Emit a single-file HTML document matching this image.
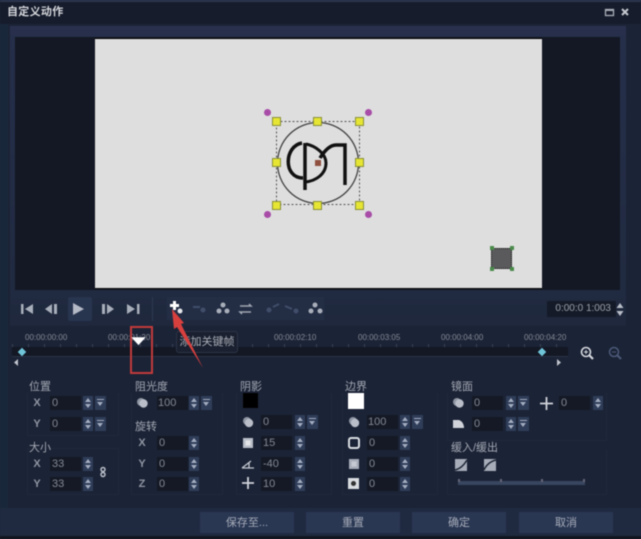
<!DOCTYPE html>
<html><head><meta charset="utf-8">
<style>
html,body{margin:0;padding:0;background:#1b2336}
body{width:641px;height:539px;overflow:hidden;position:relative;background:#1b2336;font-family:"Liberation Sans","Noto Sans CJK SC",sans-serif;filter:blur(.45px)}
div{position:absolute;box-sizing:border-box}
.t{color:#a3a8b2;font-size:11px;line-height:14px;white-space:nowrap}
.l{color:#8f95a1;font-size:11px;line-height:14px;width:12px;text-align:center;font-weight:bold}
.i{background:#141925;color:#828894;font-size:11px;line-height:15px;height:14px;padding-left:2px;width:31px}
.s{width:10px;height:14px;background:#2f3d59}
.s:before{content:"";position:absolute;left:2px;top:2px;border:3px solid transparent;border-top:0;border-bottom:4px solid #a3adc0}
.s:after{content:"";position:absolute;left:2px;bottom:2px;border:3px solid transparent;border-bottom:0;border-top:4px solid #a3adc0}
.d{width:11px;height:14px;background:#2f3d59}
.d:before{content:"";position:absolute;left:2px;top:3px;width:7px;height:1px;background:#a3adc0}
.d:after{content:"";position:absolute;left:2px;top:6px;border:3.5px solid transparent;border-bottom:0;border-top:4px solid #a3adc0}
.g{border:1px solid #20283b}
.b{top:512px;height:21px;background:#2a3753;color:#a5abb8;font-size:11px;line-height:22px;text-align:center}
.tc{color:#858a94;font-size:8px;line-height:10px;top:333px;white-space:nowrap}
.h{width:9px;height:9px;background:#e6e534;border:1px solid #8a9038}
.m{width:7px;height:7px;border-radius:50%;background:#a84ca8}
</style></head><body>
<div style="left:0;top:0;width:641px;height:2px;background:#2c3650"></div>
<div style="left:0;top:2px;width:641px;height:22px;background:#161c2c"></div>
<div class="t" style="left:7px;top:5px;font-size:11px;font-weight:bold;color:#d4d6da;letter-spacing:.3px">自定义动作</div>
<svg style="position:absolute;left:600px;top:2px" width="30" height="18"><rect x="5.500" y="7.500" width="8" height="6" fill="none" stroke="#a9adb6" stroke-width="1.300"/><rect x="5" y="7" width="9" height="2" fill="#a9adb6"/><path d="M22 7l6 6M28 7l-6 6" stroke="#c4c7cd" stroke-width="2"/></svg>
<div style="left:0;top:24px;width:8px;height:490px;background:#19273a"></div>
<div style="left:10px;top:26px;width:616px;height:300px;background:linear-gradient(#29304f 0,#262f4a 12px,#202a40 270px,#1f283c)"></div>
<div style="left:15px;top:37px;width:605px;height:253px;background:#141824"></div>
<div style="left:95px;top:38px;width:447px;height:251px;background:#dedede;border-top:1px solid #000;border-bottom:1px solid #0a0a0a"></div>
<svg style="position:absolute;left:240px;top:90px" width="150" height="140">
<rect x="36.500" y="31.500" width="83" height="83" fill="none" stroke="#555" stroke-width="1" stroke-dasharray="2 2"/>
<circle cx="78" cy="73" r="40.500" fill="none" stroke="#444" stroke-width="1.300"/>
<path d="M62 53C44 56 43 88 63 88" fill="none" stroke="#111" stroke-width="3.500"/>
<path d="M65 53V100" fill="none" stroke="#111" stroke-width="3.500"/>
<path d="M66 54C76 56 86 64 86 73C86 84 76 91 65 92" fill="none" stroke="#111" stroke-width="3"/>
<path d="M80 68C85 60 90 55 96 55L105 55V95" fill="none" stroke="#111" stroke-width="3.500"/>
<rect x="75" y="70" width="6" height="6" fill="#8f5040"/>
</svg>
<div class="m" style="left:264px;top:109px"></div><div class="m" style="left:365px;top:109px"></div><div class="m" style="left:264px;top:211px"></div><div class="m" style="left:365px;top:211px"></div>
<div class="h" style="left:272px;top:117px"></div><div class="h" style="left:313px;top:117px"></div><div class="h" style="left:355px;top:117px"></div>
<div class="h" style="left:272px;top:158px"></div><div class="h" style="left:355px;top:158px"></div>
<div class="h" style="left:272px;top:201px"></div><div class="h" style="left:313px;top:201px"></div><div class="h" style="left:355px;top:201px"></div>
<div style="left:491px;top:248px;width:21px;height:21px;background:#5a5a5c;border:1px dotted #222"></div>
<div style="left:490px;top:246px;width:4px;height:4px;background:#4a8a4a"></div><div style="left:510px;top:246px;width:4px;height:4px;background:#4a8a4a"></div><div style="left:490px;top:267px;width:4px;height:4px;background:#4a8a4a"></div><div style="left:510px;top:267px;width:4px;height:4px;background:#4a8a4a"></div>

<div style="left:68px;top:297px;width:24px;height:24px;background:#28354f;border-radius:2px"></div>
<div style="left:167px;top:297px;width:157px;height:23px;background:#232e45"></div>
<div style="left:152px;top:297px;width:1px;height:24px;background:#2d3850"></div>
<svg style="position:absolute;left:15px;top:297px" width="320" height="24" fill="#a9afba">
<rect x="6" y="7" width="2.500" height="10"/><path d="M18 7v10l-8-5z"/>
<path d="M37 7v10l-7-5z"/><rect x="39" y="7" width="3" height="10"/>
<path d="M58 6v12l11-6z" fill="#b4bac6"/>
<rect x="87" y="7" width="3" height="10"/><path d="M92 7v10l7-5z"/>
<path d="M112 7v10l8-5z"/><rect x="122" y="7" width="2.500" height="10"/>
<path d="M155 8h3v3h3v3h-3v3h-3v-3h-3v-3h3z" fill="#fff" transform="translate(3 -4)"/><circle cx="165" cy="14" r="2.500" fill="#e4e6ea"/>
<path d="M178 10h7" stroke="#414e69" stroke-width="2"/><circle cx="188" cy="13" r="2.500" fill="#414e69"/>
<circle cx="208" cy="8" r="2.500"/><circle cx="204" cy="14" r="2.500"/><circle cx="212" cy="14" r="2.500"/>
<path d="M225 9h11l-2-2M236 15h-11l2 2" stroke="#a0a6b2" stroke-width="1.500" fill="none"/>
<circle cx="254" cy="13" r="2.500" fill="#414e69"/><path d="M258 10l6-3" stroke="#414e69" stroke-width="2"/>
<path d="M270 9l7 3" stroke="#414e69" stroke-width="2"/><circle cx="281" cy="14" r="2.500" fill="#414e69"/>
<circle cx="300" cy="8" r="2.500"/><circle cx="296" cy="14" r="2.500"/><circle cx="305" cy="14" r="2.500"/>
</svg>
<div style="left:547px;top:301px;width:69px;height:16px;background:#141a27;color:#9ba0aa;font-size:10px;line-height:16px;text-align:right;padding-right:5px;white-space:nowrap">0:00:0 1:003</div>
<svg style="position:absolute;left:615px;top:302px" width="10" height="15" fill="#b9bec8"><path d="M5 1l3.500 5h-7zM5 14l3.500-5h-7z"/></svg>

<div class="tc" style="left:25px">00:00:00:00</div>
<div class="tc" style="left:108px">00:00:01:20</div>
<div class="tc" style="left:274px">00:00:02:10</div>
<div class="tc" style="left:358px">00:00:03:05</div>
<div class="tc" style="left:441px">00:00:04:00</div>
<div class="tc" style="left:524px">00:00:04:20</div>
<div style="left:12px;top:344px;width:556px;height:3px;background:repeating-linear-gradient(90deg,#3a4257 0 1px,transparent 1px 16px)"></div>
<div style="left:12px;top:347px;width:556px;height:10px;background:#131824;border-bottom:1px solid #2a3246"></div>
<div style="left:19px;top:349px;width:6px;height:6px;background:#6fc4d8;transform:rotate(45deg)"></div>
<div style="left:539px;top:349px;width:6px;height:6px;background:#6fc4d8;transform:rotate(45deg)"></div>
<svg style="position:absolute;left:12px;top:358px" width="552" height="10" fill="#c0c4cc"><path d="M6 1v7l-4-3.500z"/><path d="M545 1v7l4-3.500z"/></svg>
<svg style="position:absolute;left:578px;top:345px" width="44" height="18" fill="none"><circle cx="8" cy="7" r="4.500" stroke="#d5d8de" stroke-width="1.600"/><path d="M6 7h4M8 5v4" stroke="#d5d8de"/><path d="M11 10l4 4" stroke="#d5d8de" stroke-width="2.200"/><circle cx="36" cy="7" r="4.500" stroke="#4c5a78" stroke-width="1.500"/><path d="M34 7h4" stroke="#4c5a78"/><path d="M39 10l4 4" stroke="#4c5a78" stroke-width="2"/></svg>
<div style="left:176px;top:331px;width:62px;height:22px;background:#1a2030;border:1px solid #2c3446;border-radius:3px;color:#a9adb6;font-size:11px;line-height:20px;text-align:center;white-space:nowrap">添加关键帧</div>
<svg style="position:absolute;left:125px;top:300px" width="90" height="78">
<rect x="6" y="27" width="21" height="46" fill="none" stroke="#c03a3a" stroke-width="2"/>
<path d="M8 38h11l-5.500 6z" fill="#fff" stroke="#fff" stroke-width="1.500"/>
<path d="M47 9l12 14-3 1 22 44-26-41-3 2z" fill="#d8403e"/>
</svg>

<div class="g" style="left:27px;top:393px;width:92px;height:43px;border-top:0"></div>
<div class="g" style="left:27px;top:448px;width:92px;height:47px"></div>
<div class="g" style="left:131px;top:393px;width:92px;height:102px;border-top:0"></div>
<div class="g" style="left:236px;top:393px;width:96px;height:102px;border-top:0"></div>
<div class="g" style="left:342px;top:393px;width:96px;height:102px;border-top:0"></div>
<div class="g" style="left:447px;top:393px;width:160px;height:48px;border-top:0"></div>
<div class="g" style="left:447px;top:450px;width:160px;height:45px;border-top:0"></div>

<div class="t" style="left:29px;top:380px">位置</div>
<div class="l" style="left:31px;top:396px">X</div><div class="i" style="left:50px;top:396px">0</div><div class="s" style="left:83px;top:396px"></div><div class="d" style="left:95px;top:396px"></div>
<div class="l" style="left:31px;top:417px">Y</div><div class="i" style="left:50px;top:417px">0</div><div class="s" style="left:83px;top:417px"></div><div class="d" style="left:95px;top:417px"></div>
<div class="t" style="left:29px;top:441px">大小</div>
<div class="l" style="left:31px;top:457px">X</div><div class="i" style="left:50px;top:457px">33</div><div class="s" style="left:83px;top:457px"></div>
<div class="l" style="left:31px;top:477px">Y</div><div class="i" style="left:50px;top:477px">33</div><div class="s" style="left:83px;top:477px"></div>
<svg style="position:absolute;left:99px;top:466px" width="8" height="12" fill="none" stroke="#b9bec8" stroke-width="1.500"><circle cx="4" cy="3.500" r="2"/><circle cx="4" cy="8.500" r="2"/></svg>

<div class="t" style="left:135px;top:380px">阻光度</div>
<svg style="position:absolute;left:136px;top:397px" width="13" height="12" fill="#b9bec8"><circle cx="5" cy="5" r="4" fill="#8f96a3"/><circle cx="7.500" cy="6.500" r="4.200"/></svg>
<div class="i" style="left:157px;top:396px;padding-left:1px">100</div><div class="s" style="left:189px;top:396px"></div><div class="d" style="left:201px;top:396px"></div>
<div class="t" style="left:135px;top:420px">旋转</div>
<div class="l" style="left:136px;top:436px">X</div><div class="i" style="left:157px;top:436px">0</div><div class="s" style="left:189px;top:436px"></div>
<div class="l" style="left:136px;top:457px">Y</div><div class="i" style="left:157px;top:457px">0</div><div class="s" style="left:189px;top:457px"></div>
<div class="l" style="left:136px;top:477px">Z</div><div class="i" style="left:157px;top:477px">0</div><div class="s" style="left:189px;top:477px"></div>

<div class="t" style="left:240px;top:380px">阴影</div>
<div style="left:243px;top:393px;width:15px;height:15px;background:#000"></div>
<div class="i" style="left:261px;top:415px">0</div><div class="s" style="left:295px;top:415px"></div><div class="d" style="left:307px;top:415px"></div>
<div class="i" style="left:261px;top:436px">15</div><div class="s" style="left:295px;top:436px"></div>
<div class="i" style="left:261px;top:457px">-40</div><div class="s" style="left:295px;top:457px"></div>
<div class="i" style="left:261px;top:477px">10</div><div class="s" style="left:295px;top:477px"></div>
<svg style="position:absolute;left:241px;top:415px" width="14" height="78">
<circle cx="6" cy="6" r="4" fill="#8f96a3"/><circle cx="8" cy="8" r="4.200" fill="#b9bec8"/>
<rect x="2" y="23" width="10" height="10" fill="#b9bec8"/><rect x="4.500" y="25.500" width="5" height="5" fill="#e2e4e8"/>
<path d="M1 53h12M1 53l9-7M8 47v6" stroke="#c4c8d0" stroke-width="1.300" fill="none"/>
<path d="M7 62v12M1 68h12" stroke="#d0d3da" stroke-width="1.800"/>
</svg>

<div class="t" style="left:345px;top:380px">边界</div>
<div style="left:348px;top:393px;width:16px;height:16px;background:#fff"></div>
<div class="i" style="left:367px;top:415px;padding-left:1px">100</div><div class="s" style="left:400px;top:415px"></div><div class="d" style="left:412px;top:415px"></div>
<div class="i" style="left:367px;top:436px">0</div><div class="s" style="left:400px;top:436px"></div>
<div class="i" style="left:367px;top:457px">0</div><div class="s" style="left:400px;top:457px"></div>
<div class="i" style="left:367px;top:477px">0</div><div class="s" style="left:400px;top:477px"></div>
<svg style="position:absolute;left:347px;top:415px" width="14" height="78">
<circle cx="6" cy="6" r="4" fill="#8f96a3"/><circle cx="8" cy="8" r="4.200" fill="#b9bec8"/>
<rect x="2" y="23" width="10" height="10" rx="2" fill="none" stroke="#d8dbe0" stroke-width="2"/>
<rect x="2" y="44" width="10" height="10" fill="#a7adb9"/><rect x="4.500" y="46.500" width="5" height="5" fill="#c6cad2"/>
<rect x="1" y="63" width="11" height="11" fill="#d8dbe0"/><circle cx="6.500" cy="68.500" r="2.500" fill="#333"/>
</svg>

<div class="t" style="left:451px;top:380px">镜面</div>
<svg style="position:absolute;left:452px;top:397px" width="13" height="32">
<circle cx="5" cy="5" r="4" fill="#8f96a3"/><circle cx="7.500" cy="6.500" r="4.200" fill="#b9bec8"/>
<path d="M1 23h6c3 1 5 4 5 8H1z" fill="#d0d3da"/>
</svg>
<div class="i" style="left:472px;top:396px">0</div><div class="s" style="left:506px;top:396px"></div><div class="d" style="left:518px;top:396px"></div>
<div class="i" style="left:472px;top:417px">0</div><div class="s" style="left:506px;top:417px"></div><div class="d" style="left:518px;top:417px"></div>
<svg style="position:absolute;left:540px;top:397px" width="13" height="13"><path d="M6.500 0v13M0 6.500h13" stroke="#d0d3da" stroke-width="1.800"/></svg>
<div class="i" style="left:559px;top:396px">0</div><div class="s" style="left:593px;top:396px"></div>
<div class="t" style="left:451px;top:441px">缓入/缓出</div>
<svg style="position:absolute;left:455px;top:459px" width="42" height="12"><rect width="12" height="12" fill="#a7adb9"/><path d="M0 11C5 10 9 6 12 1" stroke="#222a3a" stroke-width="1.500" fill="none"/><rect x="29" width="12" height="12" fill="#a7adb9"/><path d="M29 11C31 6 36 2 41 1" stroke="#222a3a" stroke-width="1.500" fill="none"/></svg>
<div style="left:458px;top:481px;width:127px;height:4px;background:#39465f"></div>
<div style="left:458px;top:479px;width:2px;height:3px;background:#667"></div><div style="left:500px;top:479px;width:2px;height:3px;background:#667"></div><div style="left:541px;top:479px;width:2px;height:3px;background:#667"></div><div style="left:583px;top:479px;width:2px;height:3px;background:#667"></div>

<div style="left:0;top:508px;width:641px;height:28px;background:#1f2a40"></div>
<div style="left:0;top:536px;width:641px;height:3px;background:#11151f"></div>
<div class="b" style="left:200px;width:94px">保存至...</div>
<div class="b" style="left:306px;width:94px">重置</div>
<div class="b" style="left:412px;width:94px">确定</div>
<div class="b" style="left:519px;width:94px">取消</div>
</body></html>
